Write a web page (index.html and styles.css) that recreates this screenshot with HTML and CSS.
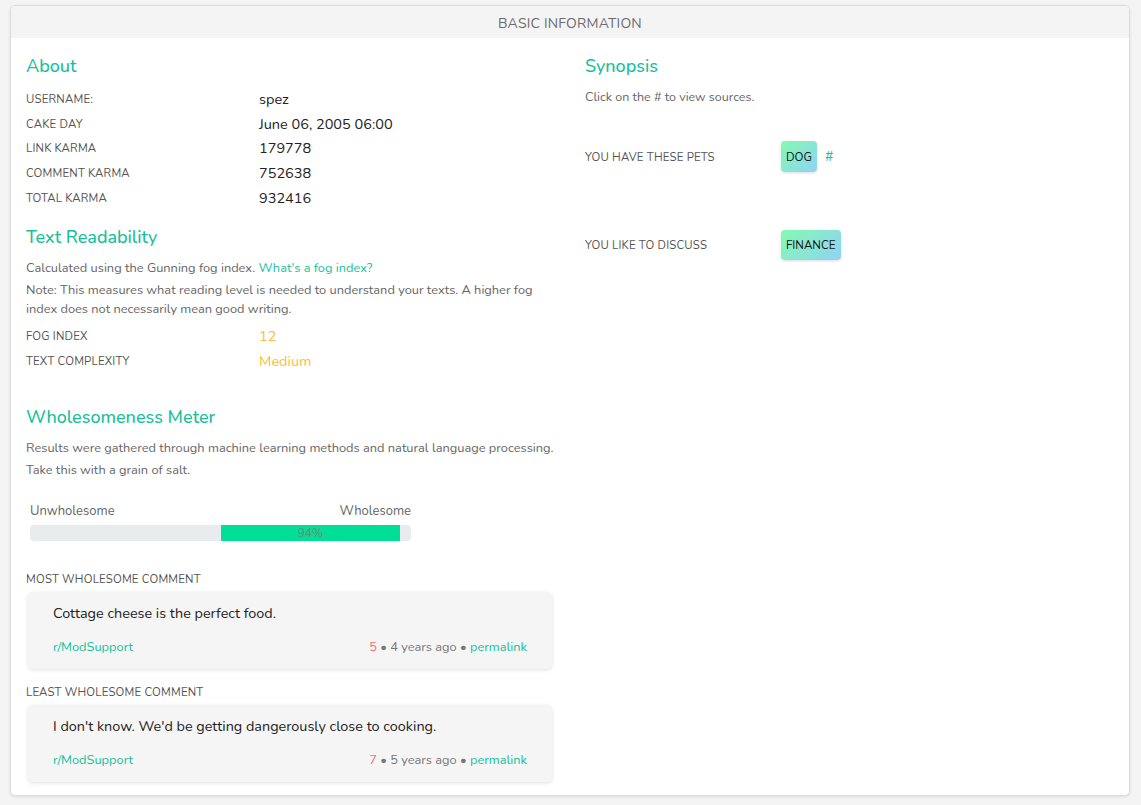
FILE: index.html
```html
<!DOCTYPE html>
<html>
<head>
<meta charset="utf-8">
<link rel="stylesheet" href="styles.css">
</head>
<body>
<div class="card">
  <div class="card-header">BASIC INFORMATION</div>
  <div class="card-body">
    <div class="col">
      <h2 class="title">About</h2>
      <div class="kv">
        <div class="kv-row"><span class="k">USERNAME:</span><span class="v">spez</span></div>
        <div class="kv-row"><span class="k">CAKE DAY</span><span class="v">June 06, 2005 06:00</span></div>
        <div class="kv-row"><span class="k">LINK KARMA</span><span class="v">179778</span></div>
        <div class="kv-row"><span class="k">COMMENT KARMA</span><span class="v">752638</span></div>
        <div class="kv-row"><span class="k">TOTAL KARMA</span><span class="v">932416</span></div>
      </div>

      <h2 class="title t2">Text Readability</h2>
      <p class="note first">Calculated using the Gunning fog index. <a class="link" href="#">What's a fog index?</a></p>
      <p class="note">Note: This measures what reading level is needed to understand your texts. A higher fog index does not necessarily mean good writing.</p>
      <div class="kv kv2">
        <div class="kv-row"><span class="k">FOG INDEX</span><span class="v warn">12</span></div>
        <div class="kv-row"><span class="k">TEXT COMPLEXITY</span><span class="v warn">Medium</span></div>
      </div>

      <h2 class="title t3">Wholesomeness Meter</h2>
      <p class="note wide">Results were gathered through machine learning methods and natural language processing.</p>
      <p class="note wide">Take this with a grain of salt.</p>

      <div class="meter">
        <div class="meter-labels"><span>Unwholesome</span><span>Wholesome</span></div>
        <div class="track">
          <div class="spacer" style="width:50%"></div>
          <div class="fill" style="width:47.2%">94%</div>
        </div>
      </div>

      <div class="label">MOST WHOLESOME COMMENT</div>
      <div class="comment">
        <div class="comment-text">Cottage cheese is the perfect food.</div>
        <div class="comment-foot">
          <a class="link" href="#">r/ModSupport</a>
          <span class="meta"><span class="score">5</span> &bull; 4 years ago &bull; <a class="link" href="#">permalink</a></span>
        </div>
      </div>

      <div class="label">LEAST WHOLESOME COMMENT</div>
      <div class="comment">
        <div class="comment-text">I don't know. We'd be getting dangerously close to cooking.</div>
        <div class="comment-foot">
          <a class="link" href="#">r/ModSupport</a>
          <span class="meta"><span class="score">7</span> &bull; 5 years ago &bull; <a class="link" href="#">permalink</a></span>
        </div>
      </div>
    </div>

    <div class="col">
      <h2 class="title">Synopsis</h2>
      <p class="hint">Click on the # to view sources.</p>
      <div class="syn-row">
        <span class="k syn-k">YOU HAVE THESE PETS</span>
        <span class="badge">DOG</span>
        <a class="hash" href="#">#</a>
      </div>
      <div class="syn-row r2">
        <span class="k syn-k">YOU LIKE TO DISCUSS</span>
        <span class="badge">FINANCE</span>
      </div>
    </div>
  </div>
</div>
</body>
</html>
```

FILE: styles.css
```css
* { box-sizing: border-box; }
html, body { margin: 0; }
body {
  background: #f4f4f4;
  font-family: "Nunito", "Lato", "Open Sans", sans-serif;
  color: #333;
  padding: 5px 11px 9px 10px;
}
a { text-decoration: none; }
.card {
  background: #fff;
  border: 1px solid #dcdcdc;
  border-radius: 5px;
  box-shadow: 0 1px 3px rgba(0,0,0,0.10);
  overflow: hidden;
}
.card-header {
  background: #f4f4f4;
  height: 32px;
  line-height: 36px;
  text-align: center;
  font-size: 14px;
  color: #6b6b6b;
  letter-spacing: 0.2px;
}
.card-body {
  display: flex;
  padding: 17px 0 13px;
}
.col {
  flex: 0 0 50%;
  padding: 0 15px;
}
.title {
  margin: 0;
  font-size: 18px;
  line-height: 22px;
  font-weight: 500;
  color: #17bf9a;
}
.t2 { margin-top: 16px; }
.t3 { margin-top: 32px; }
.kv { margin-top: 10px; }
.kv-row {
  display: flex;
  align-items: center;
  height: 24.6px;
}
.k {
  font-size: 11.4px;
  color: #555;
  letter-spacing: 0.2px;
}
.kv .k { width: 233px; flex: none; }
.v {
  font-size: 14.5px;
  color: #222;
}
.warn { color: #f5c136; }
.kv2 { margin-top: 4px; }
.kv2 .kv-row { height: 25px; }
.note {
  margin: 0 0 2.5px;
  font-size: 12.8px;
  line-height: 19.5px;
  color: #666;
}
.note.first { margin-top: 11px; }
.note.wide { line-height: 22px; margin: 0; white-space: nowrap; }
.t3 + .note.wide { margin-top: 9px; }
.link { color: #17bf9a; }
.meter {
  margin: 21px 0 0 4px;
  width: 381px;
}
.meter-labels {
  display: flex;
  justify-content: space-between;
  font-size: 13px;
  line-height: 18px;
  color: #666;
}
.track {
  margin-top: 5px;
  height: 16px;
  background: #e9ecef;
  border-radius: 4px;
  display: flex;
  overflow: hidden;
}
.fill {
  background: #00df95;
  color: #6a8a7c;
  font-size: 12px;
  line-height: 16px;
  text-align: center;
}
.label {
  font-size: 11.4px;
  color: #555;
  line-height: 14px;
  margin-top: 31px;
  letter-spacing: 0.2px;
}
.comment + .label { margin-top: 16px; }
.comment {
  margin: 6px 0 0 2px;
  width: 524px;
  background: #f5f5f5;
  border-radius: 5px;
  box-shadow: 0 1px 4px rgba(0,0,0,0.12);
  padding: 11px 25px 12px 25px;
}
.comment-text {
  font-size: 14.4px;
  line-height: 20px;
  color: #222;
}
.comment-foot {
  display: flex;
  justify-content: space-between;
  margin-top: 14px;
  font-size: 12.8px;
  line-height: 20px;
}
.meta { color: #777; }
.score { color: #ff6b6b; }
.hint {
  margin: 11px 0 0;
  font-size: 12.5px;
  line-height: 18px;
  color: #666;
}
.syn-row {
  display: flex;
  align-items: center;
  margin-top: 35px;
  height: 31px;
}
.syn-row.r2 { margin-top: 57px; }
.syn-k { width: 196px; flex: none; }
.badge {
  display: inline-flex;
  align-items: center;
  height: 100%;
  padding: 0 5px;
  font-size: 11.6px;
  color: #111;
  border-radius: 4px;
  background: linear-gradient(135deg, #84fab0, #8fd3f4);
  box-shadow: 0 1px 3px rgba(0,0,0,0.15);
}
.r2 .badge { height: 30px; }
.hash {
  margin-left: 8px;
  font-size: 14px;
  color: #17bf9a;
}
```
